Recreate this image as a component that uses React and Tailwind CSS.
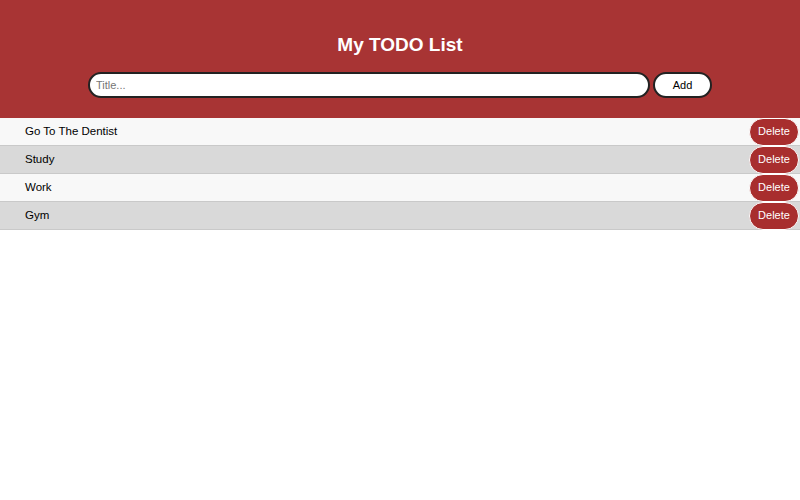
import React, { useState } from 'react';

const App = () => {
  const [todos, setTodos] = useState(['Go To The Dentist', 'Study', 'Work', 'Gym']);
  const [title, setTitle] = useState('');

  const addTodo = () => {
    if (!title.trim()) return;
    setTodos([...todos, title.trim()]);
    setTitle('');
  };

  return (
    <div className="min-h-[500px] bg-white font-['Liberation_Sans',Arial,sans-serif]">
      {/* Header */}
      <div className="flex h-[118px] flex-col items-center bg-[#a83434] pt-[33px]">
        <h1 className="text-[19px] font-bold leading-[24px] text-white">My TODO List</h1>
        <div className="mt-[15px] flex gap-[3px]">
          <input
            value={title}
            onChange={(e) => setTitle(e.target.value)}
            placeholder="Title..."
            className="h-[26px] w-[562px] rounded-full border-2 border-[#222] bg-white px-[6px] text-[11px] text-black outline-none placeholder:text-[#757575]"
          />
          <button
            onClick={addTodo}
            className="h-[26px] w-[59px] rounded-full border-2 border-[#222] bg-white text-[11px] text-black"
          >
            Add
          </button>
        </div>
      </div>

      {/* List */}
      <div>
        {todos.map((todo, i) => (
          <div
            key={i}
            className={`flex h-[28px] items-center justify-between border-b border-[#c9c9c9] pl-[25px] pr-[1px] ${
              i % 2 === 0 ? 'bg-[#f8f8f8]' : 'bg-[#d9d9d9]'
            }`}
          >
            <span className="text-[11.5px] text-black">{todo}</span>
            <button
              onClick={() => setTodos(todos.filter((_, j) => j !== i))}
              className="h-[28px] w-[50px] rounded-full border border-white bg-[#a82e2e] text-[11px] text-white"
            >
              Delete
            </button>
          </div>
        ))}
      </div>
    </div>
  );
};

export default App;
